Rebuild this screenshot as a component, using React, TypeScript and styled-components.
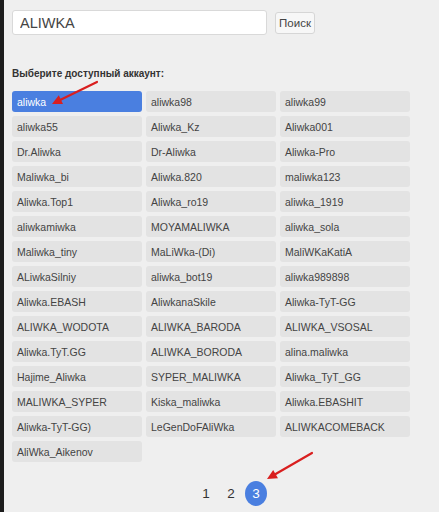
import React from "react";
import styled, { createGlobalStyle } from "styled-components";

const GlobalStyle = createGlobalStyle`
  html, body {
    margin: 0;
    padding: 0;
    background: #efefef;
  }
  body {
    font-family: "Liberation Sans", Arial, sans-serif;
  }
`;

const Page = styled.div`
  position: relative;
  width: 439px;
  height: 512px;
  box-sizing: border-box;
  border-left: 4px solid #1c1c1c;
  padding: 10px 0 0 8px;
  background: #efefef;
  overflow: hidden;
`;

const SearchBar = styled.form`
  display: flex;
  align-items: center;
  gap: 8px;
  height: 25px;
`;

const SearchInput = styled.input`
  box-sizing: border-box;
  width: 255px;
  height: 25px;
  padding: 0 7px;
  border: 1px solid #d9d9d9;
  border-radius: 3px;
  background: #fff;
  font-family: "Liberation Sans", Arial, sans-serif;
  font-size: 14.5px;
  color: #444;
  outline: none;
`;

const SearchButton = styled.button`
  box-sizing: border-box;
  width: 40px;
  height: 22px;
  padding: 0;
  border: 1px solid #d6d6d6;
  border-radius: 3px;
  background: #f7f7f7;
  font-family: "Liberation Sans", Arial, sans-serif;
  font-size: 11.5px;
  color: #444;
`;

const Label = styled.div`
  margin-top: 33px;
  font-size: 10px;
  font-weight: bold;
  color: #333;
  line-height: 12px;
`;

const AccountGrid = styled.div`
  margin-top: 11px;
  display: grid;
  grid-template-columns: repeat(3, 130px);
  grid-auto-rows: 21px;
  column-gap: 4px;
  row-gap: 4px;
`;

const Account = styled.div<{ $active?: boolean }>`
  display: flex;
  align-items: center;
  padding-left: 5px;
  border-radius: 3px;
  font-size: 10.5px;
  color: ${(p) => (p.$active ? "#fff" : "#444")};
  background: ${(p) => (p.$active ? "#4a7fe0" : "#e3e3e3")};
  white-space: nowrap;
  overflow: hidden;
`;

const Pager = styled.div`
  display: flex;
  justify-content: center;
  align-items: center;
  gap: 3px;
  margin-top: 19px;
  padding-left: 11px;
`;

const PageLink = styled.span<{ $current?: boolean }>`
  display: flex;
  align-items: center;
  justify-content: center;
  width: 22px;
  height: 25px;
  border-radius: 50%;
  font-size: 13.5px;
  color: ${(p) => (p.$current ? "#fff" : "#333")};
  background: ${(p) => (p.$current ? "#4a7fe0" : "transparent")};
`;

const Pointer = styled.svg`
  position: absolute;
  left: -4px;
  top: 0;
  pointer-events: none;
`;

const accounts = [
  "aliwka", "aliwka98", "aliwka99",
  "aliwka55", "Aliwka_Kz", "Aliwka001",
  "Dr.Aliwka", "Dr-Aliwka", "Aliwka-Pro",
  "Maliwka_bi", "Aliwka.820", "maliwka123",
  "Aliwka.Top1", "Aliwka_ro19", "aliwka_1919",
  "aliwkamiwka", "MOYAMALIWKA", "aliwka_sola",
  "Maliwka_tiny", "MaLiWka-(Di)", "MaliWKaKatiA",
  "ALiwkaSilniy", "aliwka_bot19", "aliwka989898",
  "Aliwka.EBASH", "AliwkanaSkile", "Aliwka-TyT-GG",
  "ALIWKA_WODOTA", "ALIWKA_BARODA", "ALIWKA_VSOSAL",
  "Aliwka.TyT.GG", "ALIWKA_BORODA", "alina.maliwka",
  "Hajime_Aliwka", "SYPER_MALIWKA", "Aliwka_TyT_GG",
  "MALIWKA_SYPER", "Kiska_maliwka", "Aliwka.EBASHIT",
  "Aliwka-TyT-GG)", "LeGenDoFAliWka", "ALIWKACOMEBACK",
  "AliWka_Aikenov",
];

function Arrow({ x1, y1, x2, y2 }: { x1: number; y1: number; x2: number; y2: number }) {
  const angle = Math.atan2(y2 - y1, x2 - x1);
  const len = 11;
  const spread = 0.45;
  const ax = x2 - len * Math.cos(angle - spread);
  const ay = y2 - len * Math.sin(angle - spread);
  const bx = x2 - len * Math.cos(angle + spread);
  const by = y2 - len * Math.sin(angle + spread);
  const mx = x2 - (len - 2) * Math.cos(angle);
  const my = y2 - (len - 2) * Math.sin(angle);
  return (
    <g>
      <line x1={x1} y1={y1} x2={mx} y2={my} stroke="#d91f1f" strokeWidth={2.2} strokeLinecap="round" />
      <polygon points={`${x2},${y2} ${ax},${ay} ${bx},${by}`} fill="#d91f1f" />
    </g>
  );
}

export default function App() {
  return (
    <Page>
      <GlobalStyle />
      <SearchBar onSubmit={(e) => e.preventDefault()}>
        <SearchInput defaultValue="ALIWKA" />
        <SearchButton type="submit">Поиск</SearchButton>
      </SearchBar>
      <Label>Выберите доступный аккаунт:</Label>
      <AccountGrid>
        {accounts.map((name, i) => (
          <Account key={name} $active={i === 0}>
            {name}
          </Account>
        ))}
      </AccountGrid>
      <Pager>
        <PageLink>1</PageLink>
        <PageLink>2</PageLink>
        <PageLink $current>3</PageLink>
      </Pager>
      <Pointer width={439} height={512} viewBox="0 0 439 512">
        <Arrow x1={97} y1={82} x2={52} y2={104} />
        <Arrow x1={312} y1={453} x2={267} y2={479} />
      </Pointer>
    </Page>
  );
}
